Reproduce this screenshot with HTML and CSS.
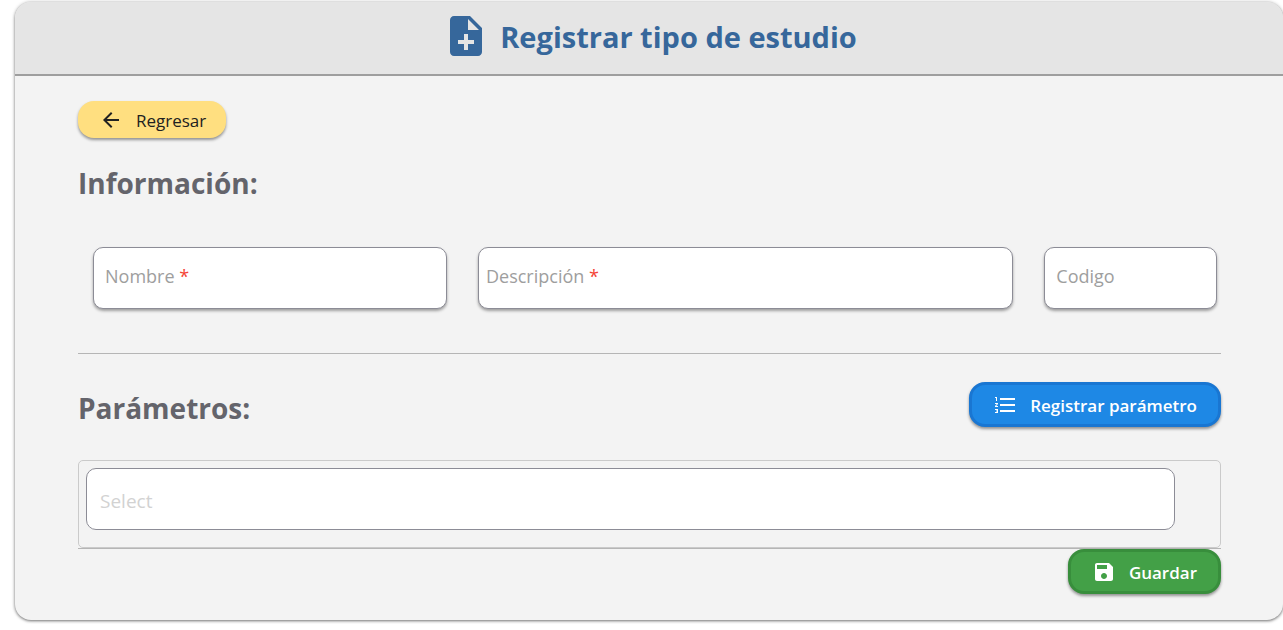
FILE: index.html
```html
<!DOCTYPE html>
<html lang="es">
<head>
<meta charset="utf-8">
<meta name="viewport" content="width=device-width, initial-scale=1">
<title>Registrar tipo de estudio</title>
<link rel="stylesheet" href="styles.css">
</head>
<body>
<main class="card">
  <header class="card-header">
    <svg class="header-icon" viewBox="4 2 16 20" aria-hidden="true"><path fill-rule="evenodd" d="M14 2H6c-1.100 0-2 .9-2 2v16c0 1.100.9 2 2 2h12c1.100 0 2-.9 2-2V8l-6-6zm2 14h-3v3h-2v-3H8v-2h3v-3h2v3h3v2zm-3-7V3.500L18.500 9H13z"/></svg>
    <h1 class="title">Registrar tipo de estudio</h1>
  </header>
  <form class="card-body">
    <button class="btn btn-back" type="button">
      <svg class="btn-icon" viewBox="0 0 24 24" aria-hidden="true"><path d="M20 11H7.830l5.590-5.590L12 4l-8 8 8 8 1.410-1.410L7.830 13H20v-2z"/></svg>
      <span class="btn-text">Regresar</span>
    </button>
    <h2 class="section-title">Información:</h2>
    <div class="fields">
      <div class="field">
        <input class="control" id="nombre" type="text" required>
        <label class="field-label" for="nombre">Nombre <span class="required">*</span></label>
      </div>
      <div class="field">
        <input class="control" id="descripcion" type="text" required>
        <label class="field-label label-near" for="descripcion">Descripción <span class="required">*</span></label>
      </div>
      <div class="field">
        <input class="control" id="codigo" type="text">
        <label class="field-label" for="codigo">Codigo</label>
      </div>
    </div>
    <hr class="divider">
    <div class="section-row">
      <h2 class="section-title">Parámetros:</h2>
      <button class="btn btn-primary" type="button">
        <svg class="btn-icon" viewBox="0 0 24 24" aria-hidden="true"><path d="M2 17h2v.5H3v1h1v.5H2v1h3v-4H2v1zm1-9h1V4H2v1h1v3zm-1 3h1.800L2 13.100v.9h3v-1H3.200L5 10.900V10H2v1zm5-6v2h15V5H7zm0 14h15v-2H7v2zm0-6h15v-2H7v2z"/></svg>
        <span class="btn-text">Registrar parámetro</span>
      </button>
    </div>
    <div class="picker">
      <select class="control control-select" aria-label="Parámetro">
        <option>Select</option>
      </select>
    </div>
    <hr class="divider">
    <div class="actions">
      <button class="btn btn-save" type="submit">
        <svg class="btn-icon" viewBox="0 0 24 24" aria-hidden="true"><path d="M17 3H5c-1.110 0-2 .9-2 2v14c0 1.100.89 2 2 2h14c1.100 0 2-.9 2-2V7l-4-4zm-5 16c-1.660 0-3-1.340-3-3s1.340-3 3-3 3 1.340 3 3-1.340 3-3 3zm3-10H5V5h10v4z"/></svg>
        <span class="btn-text">Guardar</span>
      </button>
    </div>
  </form>
</main>
</body>
</html>
```
FILE: styles.css
```css
* {
  box-sizing: border-box;
}

body {
  margin: 0;
  padding: 2px 0 8px 15px;
  background: #fff;
  font-family: "Segoe UI", "Open Sans", "Noto Sans", sans-serif;
  font-size: 18px;
  overflow-x: hidden;
}

.card {
  background: #f3f3f3;
  border-radius: 16px;
  box-shadow: 0 1px 3px rgba(0, 0, 0, 0.5), 0 0 4px rgba(0, 0, 0, 0.15);
  overflow: hidden;
}

.card-header {
  display: flex;
  align-items: center;
  justify-content: center;
  gap: 18px;
  height: 74px;
  padding: 0 0 4px 9px;
  background: #e5e5e5;
  border-bottom: 2px solid #9e9e9e;
}

.header-icon {
  width: 32px;
  height: 40px;
  fill: #36679b;
}

.title {
  margin: 0;
  padding-top: 2px;
  color: #36679b;
  font-size: 29px;
  line-height: 40px;
  font-weight: 700;
}

.card-body {
  padding: 25px 62px 26px 63px;
}

.btn {
  display: inline-flex;
  align-items: center;
  gap: 13px;
  height: 45px;
  padding: 0 21px;
  border: 3px solid transparent;
  border-radius: 16px;
  box-shadow: 0 2px 3px rgba(0, 0, 0, 0.4);
  color: #fff;
  font: inherit;
  font-weight: 600;
  font-size: 17px;
  line-height: 24px;
}

.btn-text {
  padding-top: 3px;
}

.btn-icon {
  width: 24px;
  height: 24px;
  fill: currentColor;
}

.btn-back {
  height: 37px;
  padding: 0 20px 0 21px;
  border: 0;
  background: #ffdf80;
  color: #212121;
  font-weight: 400;
}

.btn-primary {
  background: #1e88e5;
  border-color: #1976d2;
}

.btn-save {
  background: #43a047;
  border-color: #388e3c;
}

.section-title {
  margin: 25px 0 0;
  color: #64646b;
  font-size: 28px;
  line-height: 40px;
  font-weight: 700;
}

.fields {
  display: grid;
  grid-template-columns: 41fr 62fr 20fr;
  gap: 31px;
  margin: 44px 4px 44px 15px;
}

.field {
  position: relative;
}

.control {
  display: block;
  width: 100%;
  height: 62px;
  padding: 0 12px;
  border: 1px solid #8c8c96;
  border-radius: 10px;
  background: #fff;
  box-shadow: 0 2px 3px rgba(0, 0, 0, 0.35);
  color: #333;
  font: inherit;
}

.field-label {
  position: absolute;
  top: 17px;
  left: 12px;
  color: #9e9e9e;
  line-height: 24px;
}

.label-near {
  left: 8px;
}

.required {
  color: #f44336;
}

.divider {
  margin: 0;
  border: 0;
  border-top: 1px solid #b5b5b5;
}

.section-row {
  display: flex;
  align-items: flex-start;
  justify-content: space-between;
  padding: 28px 0 32px;
}

.section-row .section-title {
  margin-top: 6px;
}

.picker {
  padding: 7px 45px 17px 7px;
  border: 1px solid #cacaca;
  border-radius: 5px;
}

.control-select {
  appearance: none;
  padding: 3px 13px 0;
  box-shadow: none;
  color: #d2d2d2;
  font-size: 19px;
}

.actions {
  display: flex;
  justify-content: flex-end;
}
```
